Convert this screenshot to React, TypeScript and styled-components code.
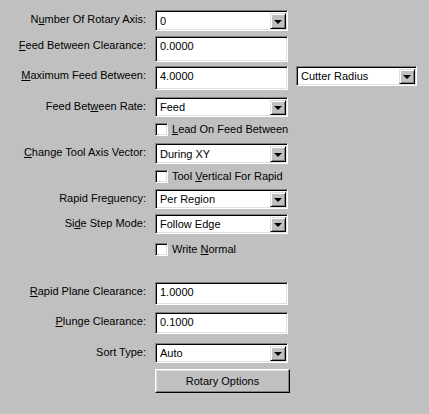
import React from "react";
import styled, { createGlobalStyle } from "styled-components";

const Global = createGlobalStyle`
  html, body { margin: 0; padding: 0; background: #c0c0c0; }
  body { font-family: "Liberation Sans", Arial, sans-serif; font-size: 11px; color: #000; }
`;

const Panel = styled.div`
  width: 429px;
  height: 414px;
  box-sizing: border-box;
  background: #c0c0c0;
  padding-top: 10px;
  display: flex;
  flex-direction: column;
`;

const Row = styled.div<{ $mt: number; $h: number }>`
  display: flex;
  align-items: flex-start;
  margin-top: ${(p) => p.$mt}px;
  height: ${(p) => p.$h}px;
`;

const Label = styled.div`
  width: 146px;
  text-align: right;
  padding-top: 3px;
  margin-right: 9px;
  white-space: nowrap;
  line-height: 13px;
`;

const TextBox = styled.div<{ $h: number; $w?: number }>`
  box-sizing: border-box;
  width: ${(p) => p.$w ?? 133}px;
  height: ${(p) => p.$h}px;
  background: #fff;
  border-top: 1px solid #808080;
  border-left: 1px solid #808080;
  border-right: 1px solid #fff;
  border-bottom: 1px solid #fff;
  box-shadow: inset 1px 1px 0 #000, inset -1px -1px 0 #dfdfdf;
  padding: 3px 0 0 4px;
  line-height: 13px;
`;

const Combo = styled.div<{ $h: number; $w?: number; $ml?: number }>`
  box-sizing: border-box;
  width: ${(p) => p.$w ?? 133}px;
  height: ${(p) => p.$h}px;
  margin-left: ${(p) => p.$ml ?? 0}px;
  background: #fff;
  border-top: 1px solid #808080;
  border-left: 1px solid #808080;
  border-right: 1px solid #fff;
  border-bottom: 1px solid #fff;
  box-shadow: inset 1px 1px 0 #000, inset -1px -1px 0 #dfdfdf;
  display: flex;
  align-items: stretch;
  padding: 2px 1px 1px 2px;
`;

const ComboText = styled.div`
  flex: 1;
  padding-left: 2px;
  display: flex;
  align-items: center;
  line-height: 13px;
`;

const DropButton = styled.div`
  box-sizing: border-box;
  width: 16px;
  background: #c0c0c0;
  border-top: 1px solid #dfdfdf;
  border-left: 1px solid #dfdfdf;
  border-right: 1px solid #000;
  border-bottom: 1px solid #000;
  box-shadow: inset 1px 1px 0 #fff, inset -1px -1px 0 #808080;
  display: flex;
  align-items: center;
  justify-content: center;
`;

const Arrow = styled.div`
  width: 0;
  height: 0;
  border-left: 4px solid transparent;
  border-right: 4px solid transparent;
  border-top: 4px solid #000;
  margin-top: 1px;
`;

const CheckRow = styled.label`
  display: flex;
  align-items: center;
  padding-left: 155px;
  line-height: 13px;
`;

const CheckBox = styled.span`
  box-sizing: border-box;
  width: 13px;
  height: 13px;
  background: #fff;
  border-top: 1px solid #808080;
  border-left: 1px solid #808080;
  border-right: 1px solid #fff;
  border-bottom: 1px solid #fff;
  box-shadow: inset 1px 1px 0 #000, inset -1px -1px 0 #dfdfdf;
  margin-right: 4px;
  flex: none;
`;

const Button = styled.div`
  box-sizing: border-box;
  margin-left: 155px;
  width: 135px;
  height: 24px;
  background: #c0c0c0;
  border-top: 1px solid #fff;
  border-left: 1px solid #fff;
  border-right: 1px solid #000;
  border-bottom: 1px solid #000;
  box-shadow: inset -1px -1px 0 #808080, inset 1px 1px 0 #dfdfdf;
  display: flex;
  align-items: center;
  justify-content: center;
  line-height: 13px;
`;

const ComboBox = ({ value, h, w, ml }: { value: string; h: number; w?: number; ml?: number }) => (
  <Combo $h={h} $w={w} $ml={ml}>
    <ComboText>{value}</ComboText>
    <DropButton>
      <Arrow />
    </DropButton>
  </Combo>
);

export default function App() {
  return (
    <>
      <Global />
      <Panel>
        <Row $mt={0} $h={21}>
          <Label>N<u>u</u>mber Of Rotary Axis:</Label>
          <ComboBox value="0" h={21} />
        </Row>
        <Row $mt={5} $h={26}>
          <Label><u>F</u>eed Between Clearance:</Label>
          <TextBox $h={26}>0.0000</TextBox>
        </Row>
        <Row $mt={4} $h={24}>
          <Label><u>M</u>aximum Feed Between:</Label>
          <TextBox $h={24}>4.0000</TextBox>
          <ComboBox value="Cutter Radius" h={20} w={121} ml={8} />
        </Row>
        <Row $mt={7} $h={20}>
          <Label>Feed Bet<u>w</u>een Rate:</Label>
          <ComboBox value="Feed" h={20} />
        </Row>
        <Row $mt={6} $h={14}>
          <CheckRow>
            <CheckBox />
            <span><u>L</u>ead On Feed Between</span>
          </CheckRow>
        </Row>
        <Row $mt={6} $h={21}>
          <Label><u>C</u>hange Tool Axis Vector:</Label>
          <ComboBox value="During XY" h={21} />
        </Row>
        <Row $mt={6} $h={14}>
          <CheckRow>
            <CheckBox />
            <span>Tool <u>V</u>ertical For Rapid</span>
          </CheckRow>
        </Row>
        <Row $mt={5} $h={20}>
          <Label>Rapid Fre<u>q</u>uency:</Label>
          <ComboBox value="Per Region" h={20} />
        </Row>
        <Row $mt={5} $h={20}>
          <Label>Si<u>d</u>e Step Mode:</Label>
          <ComboBox value="Follow Edge" h={20} />
        </Row>
        <Row $mt={9} $h={14}>
          <CheckRow>
            <CheckBox />
            <span>Write <u>N</u>ormal</span>
          </CheckRow>
        </Row>
        <Row $mt={25} $h={23}>
          <Label><u>R</u>apid Plane Clearance:</Label>
          <TextBox $h={23}>1.0000</TextBox>
        </Row>
        <Row $mt={7} $h={22}>
          <Label><u>P</u>lunge Clearance:</Label>
          <TextBox $h={22}>0.1000</TextBox>
        </Row>
        <Row $mt={9} $h={20}>
          <Label>Sort Type:</Label>
          <ComboBox value="Auto" h={20} />
        </Row>
        <Row $mt={6} $h={24}>
          <Button>Rotary Options</Button>
        </Row>
      </Panel>
    </>
  );
}
